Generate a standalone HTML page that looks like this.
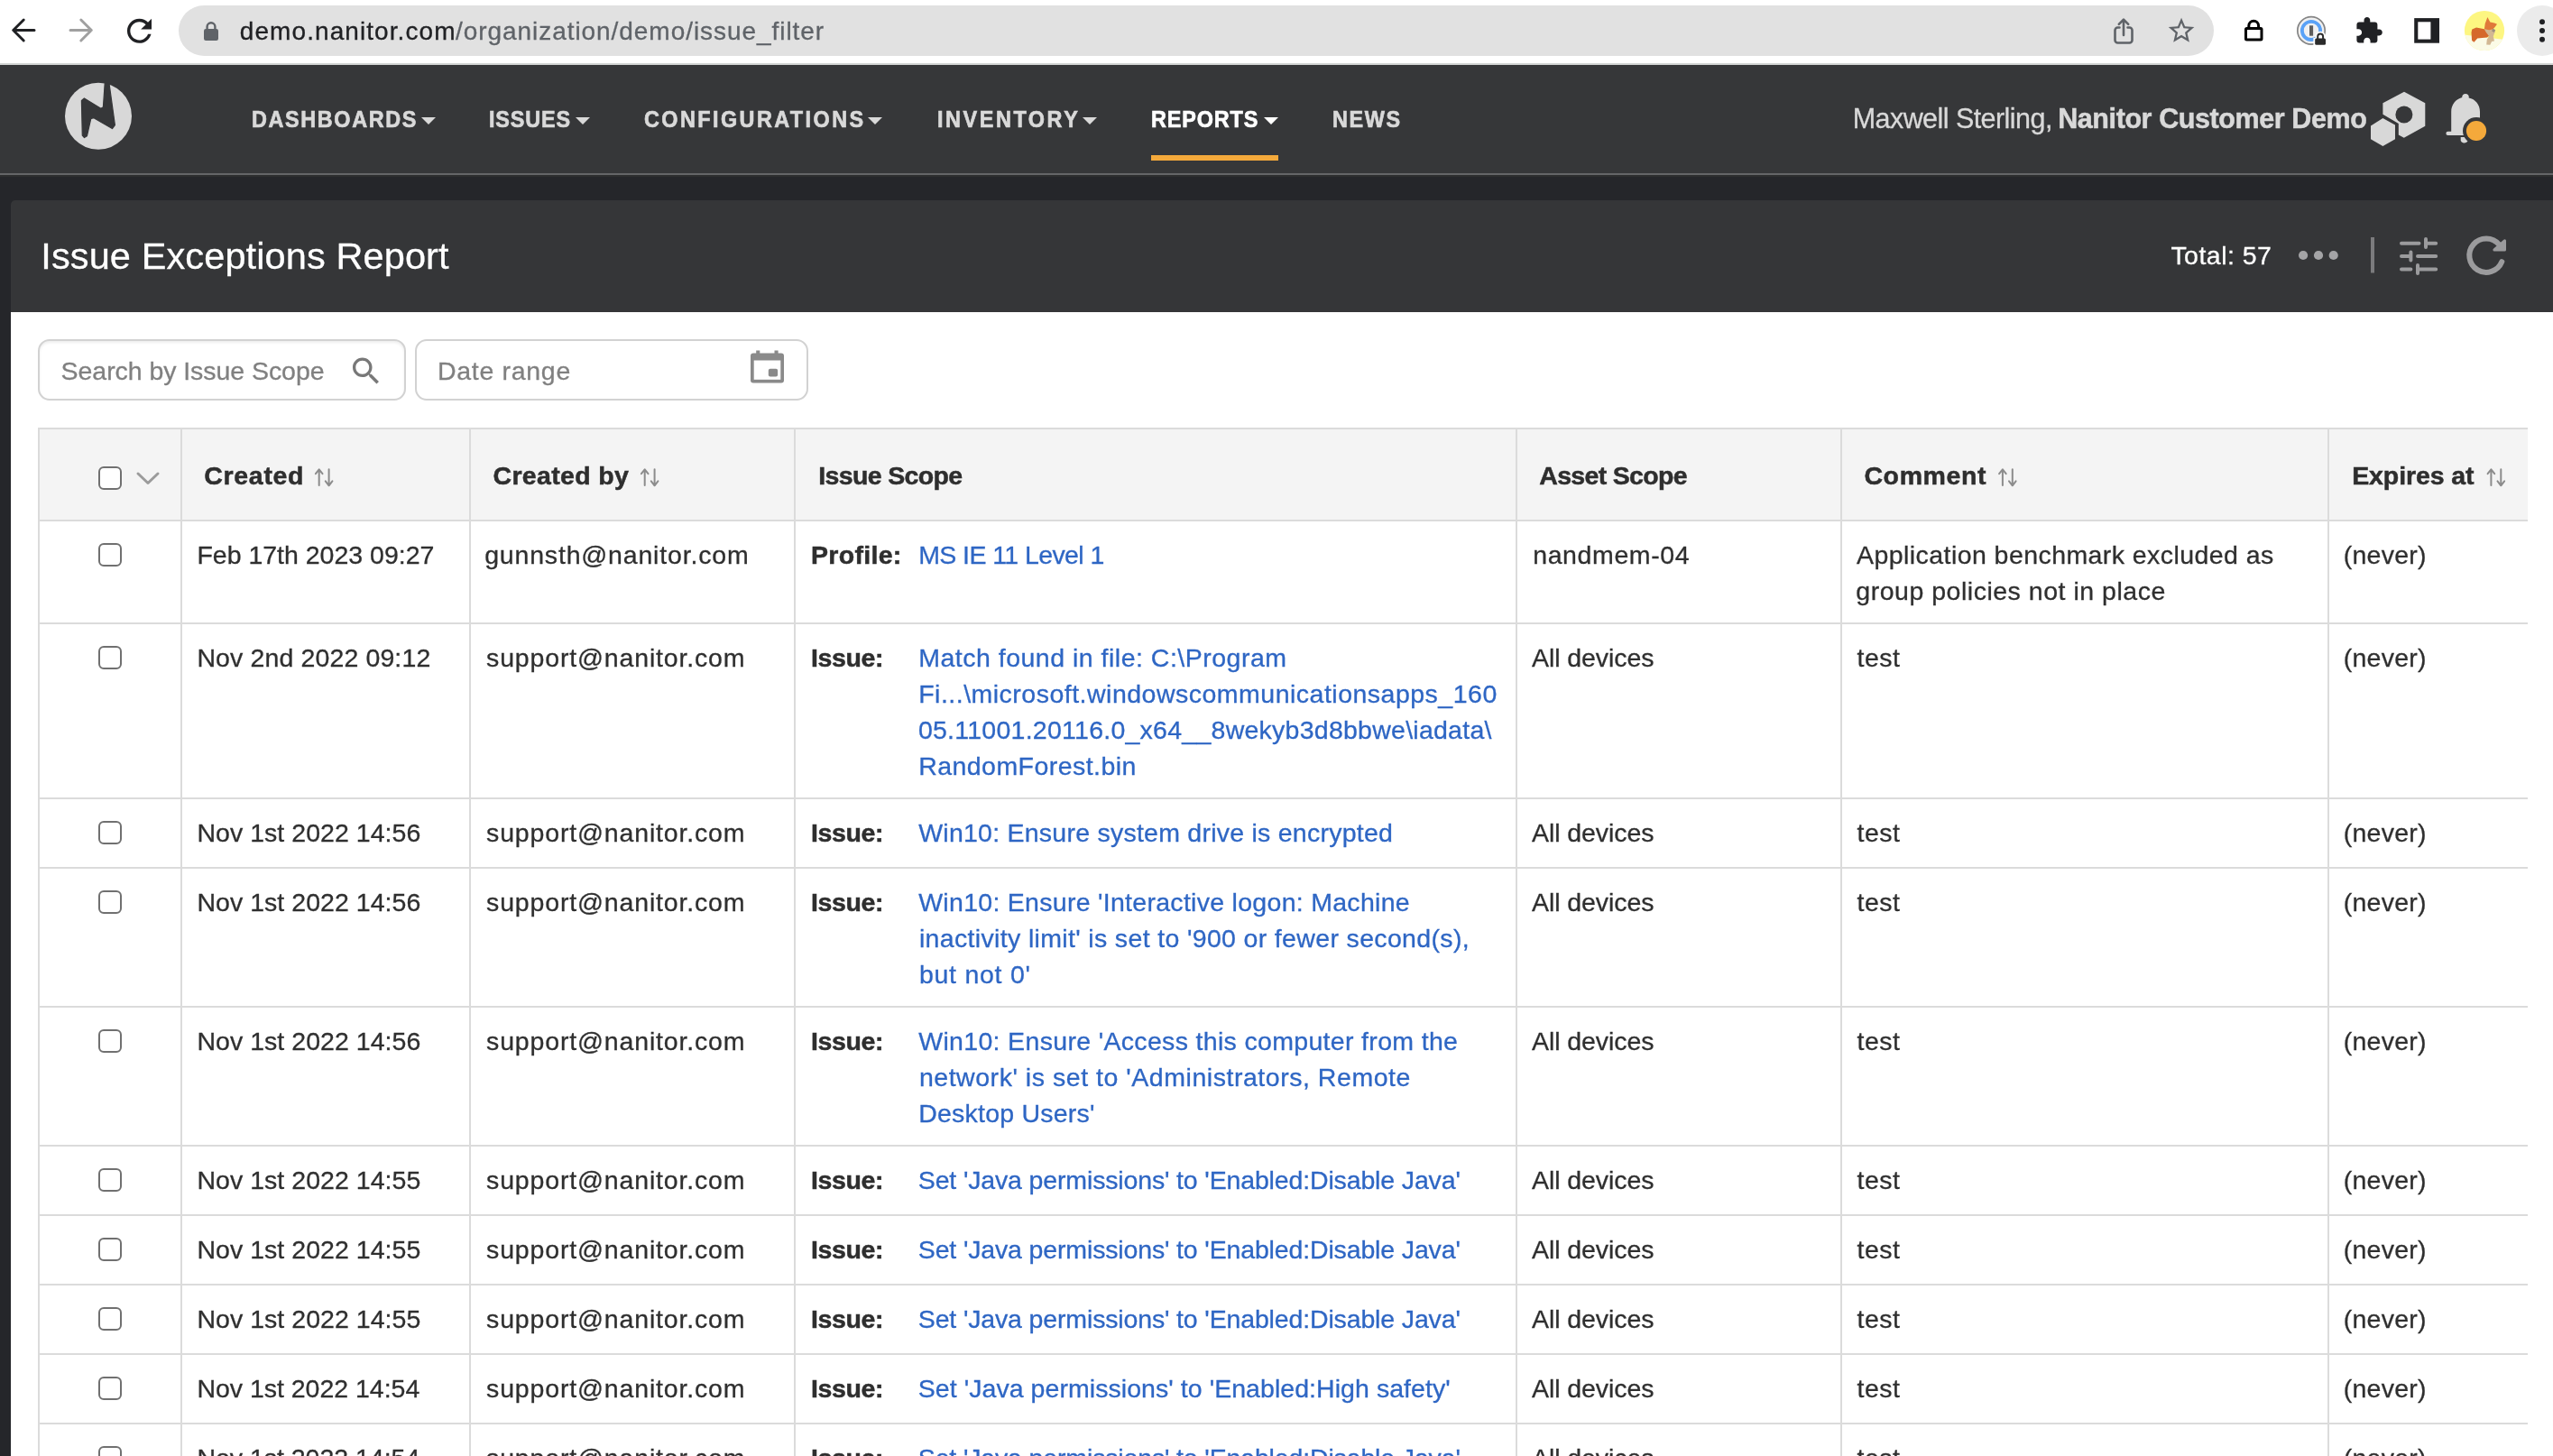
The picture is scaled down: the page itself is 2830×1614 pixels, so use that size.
<!DOCTYPE html>
<html><head><meta charset="utf-8"><title>Issue Exceptions Report</title>
<style>
html,body{margin:0;padding:0}
body{width:2830px;height:1614px;overflow:hidden;position:relative;background:#fff;font-family:"Liberation Sans", sans-serif}
.b{position:absolute}
.t{position:absolute;white-space:pre;font-family:"Liberation Sans", sans-serif}
svg.ov{position:absolute;left:0;top:0}
#root{position:absolute;left:0;top:0;width:2830px;height:1614px;overflow:hidden}
html{overflow:hidden}
#tx{position:absolute;left:0;top:0;width:2830px;height:1614px;will-change:transform}
</style></head><body>
<div id="root">
<div class="b" style="left:0px;top:0px;width:2830px;height:70px;background:#ffffff;"></div>
<div class="b" style="left:0px;top:70px;width:2830px;height:2px;background:#d3d5d4;"></div>
<div class="b" style="left:198px;top:6px;width:2256px;height:56px;background:#e1e1e1;border-radius:28px"></div>
<div class="b" style="left:2790px;top:6px;width:56px;height:56px;background:#ebebeb;border-radius:28px"></div>
<div class="b" style="left:0px;top:72px;width:2830px;height:120px;background:#363739;"></div>
<div class="b" style="left:0px;top:192px;width:2830px;height:2px;background:#656668;"></div>
<div class="b" style="left:0px;top:194px;width:2830px;height:1420px;background:#25262a;"></div>
<div class="b" style="left:0px;top:194px;width:2830px;height:2px;background:#2d2e2f;"></div>
<div class="b" style="left:1276px;top:172px;width:141px;height:6px;background:#f4a93b;"></div>
<div class="b" style="left:12px;top:222px;width:2818px;height:124px;background:#353638;border-radius:5px 0 0 0"></div>
<div class="b" style="left:12px;top:346px;width:2818px;height:1268px;background:#ffffff;"></div>
<div class="b" style="left:42px;top:376px;width:408px;height:68px;background:#fff;border:2px solid #d2d2d2;border-radius:13px;box-sizing:border-box;box-shadow:inset 0 2px 3px rgba(0,0,0,0.07)"></div>
<div class="b" style="left:460px;top:376px;width:436px;height:68px;background:#fff;border:2px solid #d2d2d2;border-radius:13px;box-sizing:border-box"></div>
<div class="b" style="left:42px;top:476px;width:2760px;height:100px;background:#f4f4f4;"></div>
<div class="b" style="left:42px;top:474px;width:2760px;height:2px;background:#dbdbdb;"></div>
<div class="b" style="left:42px;top:576px;width:2760px;height:2px;background:#dbdbdb;"></div>
<div class="b" style="left:42px;top:690px;width:2760px;height:2px;background:#dbdbdb;"></div>
<div class="b" style="left:42px;top:884px;width:2760px;height:2px;background:#dbdbdb;"></div>
<div class="b" style="left:42px;top:961px;width:2760px;height:2px;background:#dbdbdb;"></div>
<div class="b" style="left:42px;top:1115px;width:2760px;height:2px;background:#dbdbdb;"></div>
<div class="b" style="left:42px;top:1269px;width:2760px;height:2px;background:#dbdbdb;"></div>
<div class="b" style="left:42px;top:1346px;width:2760px;height:2px;background:#dbdbdb;"></div>
<div class="b" style="left:42px;top:1423px;width:2760px;height:2px;background:#dbdbdb;"></div>
<div class="b" style="left:42px;top:1500px;width:2760px;height:2px;background:#dbdbdb;"></div>
<div class="b" style="left:42px;top:1577px;width:2760px;height:2px;background:#dbdbdb;"></div>
<div class="b" style="left:42px;top:474px;width:2px;height:1140px;background:#dbdbdb;"></div>
<div class="b" style="left:200px;top:474px;width:2px;height:1140px;background:#dbdbdb;"></div>
<div class="b" style="left:520px;top:474px;width:2px;height:1140px;background:#dbdbdb;"></div>
<div class="b" style="left:880px;top:474px;width:2px;height:1140px;background:#dbdbdb;"></div>
<div class="b" style="left:1680px;top:474px;width:2px;height:1140px;background:#dbdbdb;"></div>
<div class="b" style="left:2040px;top:474px;width:2px;height:1140px;background:#dbdbdb;"></div>
<div class="b" style="left:2580px;top:474px;width:2px;height:1140px;background:#dbdbdb;"></div>
<div class="b" style="left:109px;top:517px;width:26px;height:26px;background:#fff;border:2px solid #707070;border-radius:6px;box-sizing:border-box"></div>
<div class="b" style="left:109px;top:602px;width:26px;height:26px;background:#fff;border:2px solid #707070;border-radius:6px;box-sizing:border-box"></div>
<div class="b" style="left:109px;top:716px;width:26px;height:26px;background:#fff;border:2px solid #707070;border-radius:6px;box-sizing:border-box"></div>
<div class="b" style="left:109px;top:910px;width:26px;height:26px;background:#fff;border:2px solid #707070;border-radius:6px;box-sizing:border-box"></div>
<div class="b" style="left:109px;top:987px;width:26px;height:26px;background:#fff;border:2px solid #707070;border-radius:6px;box-sizing:border-box"></div>
<div class="b" style="left:109px;top:1141px;width:26px;height:26px;background:#fff;border:2px solid #707070;border-radius:6px;box-sizing:border-box"></div>
<div class="b" style="left:109px;top:1295px;width:26px;height:26px;background:#fff;border:2px solid #707070;border-radius:6px;box-sizing:border-box"></div>
<div class="b" style="left:109px;top:1372px;width:26px;height:26px;background:#fff;border:2px solid #707070;border-radius:6px;box-sizing:border-box"></div>
<div class="b" style="left:109px;top:1449px;width:26px;height:26px;background:#fff;border:2px solid #707070;border-radius:6px;box-sizing:border-box"></div>
<div class="b" style="left:109px;top:1526px;width:26px;height:26px;background:#fff;border:2px solid #707070;border-radius:6px;box-sizing:border-box"></div>
<div class="b" style="left:109px;top:1603px;width:26px;height:26px;background:#fff;border:2px solid #707070;border-radius:6px;box-sizing:border-box"></div>
<svg class="ov" width="2830" height="1614" viewBox="0 0 2830 1614">
<polygon points="467,130 483,130 475,138" fill="#d9d9d9"/><polygon points="638,130 654,130 646,138" fill="#d9d9d9"/><polygon points="962,130 978,130 970,138" fill="#d9d9d9"/><polygon points="1200,130 1216,130 1208,138" fill="#d9d9d9"/><polygon points="1401,130 1417,130 1409,138" fill="#ffffff"/>
<g fill="none" stroke="#8c8c8c" stroke-width="2" stroke-linecap="round" stroke-linejoin="round"><path d="M353.70000000000005,538 V520.6 M349.90000000000003,525.2 L353.70000000000005,520.3 L357.50000000000006,525.2"/><path d="M364.6,520.3 V538 M360.8,533.4 L364.6,538.3 L368.40000000000003,533.4"/></g><g fill="none" stroke="#8c8c8c" stroke-width="2" stroke-linecap="round" stroke-linejoin="round"><path d="M714.7,538 V520.6 M710.9000000000001,525.2 L714.7,520.3 L718.5,525.2"/><path d="M725.6,520.3 V538 M721.8000000000001,533.4 L725.6,538.3 L729.4,533.4"/></g><g fill="none" stroke="#8c8c8c" stroke-width="2" stroke-linecap="round" stroke-linejoin="round"><path d="M2219.9,538 V520.6 M2216.1,525.2 L2219.9,520.3 L2223.7000000000003,525.2"/><path d="M2230.8,520.3 V538 M2227.0,533.4 L2230.8,538.3 L2234.6000000000004,533.4"/></g><g fill="none" stroke="#8c8c8c" stroke-width="2" stroke-linecap="round" stroke-linejoin="round"><path d="M2761.4,538 V520.6 M2757.6,525.2 L2761.4,520.3 L2765.2000000000003,525.2"/><path d="M2772.3,520.3 V538 M2768.5,533.4 L2772.3,538.3 L2776.1000000000004,533.4"/></g>
<path d="M153,525 L164,535.5 L175,525" fill="none" stroke="#9b9b9b" stroke-width="3" stroke-linecap="round" stroke-linejoin="round"/>
<g fill="none" stroke-width="3" stroke-linecap="round" stroke-linejoin="round"><path stroke="#202124" d="M38,33.5 H15 M26.2,22 L14.7,33.5 L26.2,45"/><path stroke="#a0a0a0" d="M78,33.5 H101 M89.8,22 L101.3,33.5 L89.8,45"/></g>
<g transform="translate(134.2,14.0) scale(1.69)"><path fill="#202124" d="M17.65 6.35C16.2 4.9 14.21 4 12 4c-4.42 0-7.99 3.58-7.99 8s3.57 8 7.99 8c3.73 0 6.84-2.55 7.73-6h-2.08c-.82 2.33-3.04 4-5.65 4-3.31 0-6-2.69-6-6s2.69-6 6-6c1.66 0 3.14.69 4.22 1.78L13 11h7V4l-2.35 2.35z"/></g>
<g><rect x="226" y="32" width="16" height="13" rx="2.2" fill="#5f6368"/><path d="M229.6,33 V29.6 a4.4,4.4 0 0 1 8.8,0 V33" fill="none" stroke="#5f6368" stroke-width="2.4"/></g>
<g fill="none" stroke="#5f6368" stroke-width="2.6" stroke-linecap="round" stroke-linejoin="round"><path d="M2349.5,30.5 H2347.5 a3,3 0 0 0 -3,3 V44.5 a3,3 0 0 0 3,3 H2360.5 a3,3 0 0 0 3,-3 V33.5 a3,3 0 0 0 -3,-3 H2358.5"/><path d="M2354,39 V22 M2348.8,26.8 L2354,21.6 L2359.2,26.8"/></g>
<g transform="translate(2400.9,16.8) scale(1.43)"><path fill="#5f6368" d="M22 9.24l-7.19-.62L12 2 9.19 8.63 2 9.24l5.46 4.73L5.82 21 12 17.27 18.18 21l-1.63-7.03L22 9.24zM12 15.4l-3.76 2.27 1-4.28-3.32-2.88 4.38-.38L12 6.1l1.71 4.04 4.38.38-3.32 2.88 1 4.28L12 15.4z"/></g>
<g fill="none" stroke="#000" stroke-width="3"><rect x="2489.5" y="31.5" width="17.5" height="12.5" rx="1"/><path d="M2492.8,31 V28.6 a5.4,5.4 0 0 1 10.8,0 V31"/></g>
<g><circle cx="2562" cy="33.9" r="15.2" fill="#f1f1f1" stroke="#858585" stroke-width="1.7"/><circle cx="2562" cy="33.9" r="10.1" fill="#f1f1f1" stroke="#5aa2f7" stroke-width="3.8"/><rect x="2560" y="28.3" width="4.1" height="11.4" fill="#5e5e5e"/><path d="M2564.4,51.5 V42 h2 V40.3 a5.7,5.7 0 0 1 11.4,0 V42 H2580 V51.5 Z" fill="#fff"/><rect x="2566.2" y="42.4" width="11.8" height="7.4" rx="1.5" fill="#2b2b2b"/><path d="M2569.2,43 V40.5 a2.95,2.95 0 0 1 5.9,0 V43" fill="none" stroke="#2b2b2b" stroke-width="2"/></g>
<g transform="translate(2609.7,17.75) scale(1.352)"><path fill="#202124" d="M20.5 11H19V7c0-1.1-.9-2-2-2h-4V3.5C13 2.12 11.88 1 10.5 1S8 2.12 8 3.5V5H4c-1.1 0-1.99.9-1.99 2v3.8H3.5c1.49 0 2.7 1.21 2.7 2.7s-1.21 2.7-2.7 2.7H2V20c0 1.1.9 2 2 2h3.8v-1.5c0-1.49 1.21-2.7 2.7-2.7 1.49 0 2.7 1.21 2.7 2.7V22H17c1.1 0 2-.9 2-2v-4h1.5c1.38 0 2.5-1.12 2.5-2.5S21.88 11 20.5 11z"/></g>
<g><rect x="2676.2" y="20.1" width="27.8" height="27.6" fill="#202124"/><rect x="2680.3" y="24.3" width="14.1" height="19.3" fill="#fff"/></g>
<g><defs><clipPath id="avc"><circle cx="2754" cy="34" r="22.1"/></clipPath></defs><circle cx="2754" cy="34" r="22.1" fill="#fdf681"/><g clip-path="url(#avc)"><polygon points="2730,38.4 2778,44 2778,58 2730,58" fill="#fbfbe6"/><polygon points="2740.3,32.6 2745,30.6 2753.9,32.3 2760.3,39.1 2756.8,41.4 2746.2,42.4 2742.5,46.7 2740.1,45 2739.5,36.1" fill="#d5682c"/><polygon points="2753.9,32.3 2763.3,32.6 2765.6,35.6 2763.8,40.3 2765,45.5 2762.1,46.1 2760.3,49.7 2756.2,49.4 2756.8,43.8 2759.1,40.3 2755.6,35.6" fill="#d2b893"/><polygon points="2753.9,32.3 2754.7,26.2 2757.4,19.1 2760.3,24.4 2765,25.6 2768,26.7 2765.4,30.3 2763.3,32.6 2759.1,33.2" fill="#e0793a"/><polygon points="2763.3,31.5 2766.2,33.2 2765,36.1 2762.1,34.4" fill="#9c8f80"/></g></g>
<g fill="#202124"><circle cx="2818" cy="24.3" r="3"/><circle cx="2818" cy="34" r="3"/><circle cx="2818" cy="43.8" r="3"/></g>
<g><circle cx="109" cy="128.7" r="37" fill="#d8d8d8"/><path d="M90.4,111.5 L93.4,108.9 L111.8,120.2 L114.4,118.9 L116.3,91 L121,92.5 L127.4,138.7 L124.4,142.6 L103.6,130.6 L100.7,131.8 L96.4,150.8 L93.5,152.6 L91.3,150.2 Z" fill="#363739" stroke="#363739" stroke-width="1.2" stroke-linejoin="round"/></g>
<g fill="#d8d8d8"><path d="M2665,101.8 L2688.3,114.3 V139.7 L2664.8,152.8 L2658.8,149.4 V136.9 L2641.4,126.8 V114.3 Z"/><circle cx="2664.9" cy="127" r="9.5" fill="#363739"/><path d="M2641.4,130.9 L2655,138.6 V154.2 L2641.4,162 L2628,154.2 V139.4 Z"/></g>
<g><path fill="#d8d8d8" d="M2729.3,108.6 a3.8,3.8 0 1 1 7.4,0 C2744,110 2749,116 2749,124 V145.8 H2753 V150 H2713.5 a2.1,2.1 0 0 1 0,-4.2 H2717.2 V124 C2717.2,116 2722,110 2729.2,108 Z"/><path d="M2727.7,152 h8 a4,4 0 0 1 -8,4 z" fill="#d8d8d8"/><circle cx="2745" cy="145" r="15" fill="#363739"/><circle cx="2745" cy="145" r="11.1" fill="#f4a93b"/></g>
<g fill="#a4a4a6"><circle cx="2553.1" cy="283" r="5.1"/><circle cx="2570" cy="283" r="5.1"/><circle cx="2586.7" cy="283" r="5.1"/></g><rect x="2628" y="263" width="4" height="39.5" fill="#7b7b7d"/>
<g fill="none" stroke="#9b9b9d" stroke-width="4" stroke-linecap="round"><path d="M2662,269.7 H2681.5 M2689,265 V274 M2689,269.7 H2700.2"/><path d="M2662,283.9 H2672.4 M2672.4,279.5 V288.4 M2680,283.9 H2700.2"/><path d="M2662,298.4 H2672.4 M2680,294 V303 M2680,298.4 H2700.2"/></g>
<g><path d="M2770.3,271.1 A18.7,18.7 0 1 0 2773.3,290.2" fill="none" stroke="#9b9b9d" stroke-width="6" stroke-linecap="round"/><path d="M2776.4,266.9 V277 H2765 Z" fill="#9b9b9d" stroke="#9b9b9d" stroke-width="3.2" stroke-linejoin="round"/></g>
<g transform="translate(386,391.5) scale(1.658)"><path fill="#787878" d="M15.5 14h-.79l-.28-.27C15.41 12.59 16 11.11 16 9.5 16 5.91 13.09 3 9.5 3S3 5.91 3 9.5 5.91 16 9.5 16c1.61 0 3.09-.59 4.23-1.57l.27.28v.79l5 4.99L20.49 19l-4.99-5zm-6 0C7.01 14 5 11.99 5 9.5S7.01 5 9.5 5 14 7.01 14 9.5 11.99 14 9.5 14z"/></g>
<g fill="#8a8a8a"><rect x="832" y="391.5" width="37" height="33" rx="3"/><rect x="838.2" y="388.5" width="4.1" height="5"/><rect x="858.5" y="388.5" width="4.1" height="5"/><rect x="835.7" y="399.5" width="29.6" height="21.3" fill="#fff"/><rect x="851.8" y="408.8" width="10.3" height="8.6" rx="2"/></g>
</svg>
<div id="tx">
<div class="t" style="left:265.80px;top:13.50px;font-size:28px;line-height:42px;font-weight:400;color:#202124;letter-spacing:1.077px;-webkit-text-stroke:0.3px currentColor">demo.nanitor.com</div>
<div class="t" style="left:505.00px;top:13.50px;font-size:28px;line-height:42px;font-weight:400;color:#5f6368;letter-spacing:0.945px;-webkit-text-stroke:0.3px currentColor">/organization/demo/issue_filter</div>
<div class="t" style="left:278.50px;top:112.80px;font-size:26px;line-height:39px;font-weight:700;color:#d9d9d9;letter-spacing:1.802px;-webkit-text-stroke:0.7px currentColor;transform:scaleX(0.90);transform-origin:0 0">DASHBOARDS</div>
<div class="t" style="left:542.30px;top:112.80px;font-size:26px;line-height:39px;font-weight:700;color:#d9d9d9;letter-spacing:0.928px;-webkit-text-stroke:0.7px currentColor;transform:scaleX(0.90);transform-origin:0 0">ISSUES</div>
<div class="t" style="left:713.60px;top:112.80px;font-size:26px;line-height:39px;font-weight:700;color:#d9d9d9;letter-spacing:2.705px;-webkit-text-stroke:0.7px currentColor;transform:scaleX(0.90);transform-origin:0 0">CONFIGURATIONS</div>
<div class="t" style="left:1038.70px;top:112.80px;font-size:26px;line-height:39px;font-weight:700;color:#d9d9d9;letter-spacing:2.859px;-webkit-text-stroke:0.7px currentColor;transform:scaleX(0.90);transform-origin:0 0">INVENTORY</div>
<div class="t" style="left:1276.40px;top:112.80px;font-size:26px;line-height:39px;font-weight:700;color:#ffffff;letter-spacing:0.962px;-webkit-text-stroke:0.7px currentColor;transform:scaleX(0.90);transform-origin:0 0">REPORTS</div>
<div class="t" style="left:1476.70px;top:112.80px;font-size:26px;line-height:39px;font-weight:700;color:#d9d9d9;letter-spacing:1.818px;-webkit-text-stroke:0.7px currentColor;transform:scaleX(0.90);transform-origin:0 0">NEWS</div>
<div class="t" style="left:2053.70px;top:108.00px;font-size:30.5px;line-height:46px;font-weight:400;color:#d9d9d9;letter-spacing:-0.553px;-webkit-text-stroke:0.3px currentColor">Maxwell Sterling,</div>
<div class="t" style="left:2281.20px;top:108.00px;font-size:30.5px;line-height:46px;font-weight:700;color:#d9d9d9;letter-spacing:-0.408px;-webkit-text-stroke:0.5px currentColor">Nanitor Customer Demo</div>
<div class="t" style="left:45.30px;top:252.50px;font-size:41.5px;line-height:62px;font-weight:400;color:#ffffff;letter-spacing:0.110px;-webkit-text-stroke:0.3px currentColor">Issue Exceptions Report</div>
<div class="t" style="left:2406.40px;top:262.30px;font-size:28.5px;line-height:43px;font-weight:400;color:#ffffff;letter-spacing:0.477px;-webkit-text-stroke:0.3px currentColor">Total: 57</div>
<div class="t" style="left:67.60px;top:389.70px;font-size:28.5px;line-height:43px;font-weight:400;color:#808080;letter-spacing:-0.057px;-webkit-text-stroke:0.3px currentColor">Search by Issue Scope</div>
<div class="t" style="left:485.00px;top:389.50px;font-size:28.5px;line-height:43px;font-weight:400;color:#808080;letter-spacing:0.693px;-webkit-text-stroke:0.3px currentColor">Date range</div>
<div class="t" style="left:226.30px;top:505.70px;font-size:28.5px;line-height:43px;font-weight:700;color:#2e2e2e;letter-spacing:0.681px;-webkit-text-stroke:0.5px currentColor">Created</div>
<div class="t" style="left:546.50px;top:505.70px;font-size:28.5px;line-height:43px;font-weight:700;color:#2e2e2e;letter-spacing:0.328px;-webkit-text-stroke:0.5px currentColor">Created by</div>
<div class="t" style="left:907.30px;top:505.70px;font-size:28.5px;line-height:43px;font-weight:700;color:#2e2e2e;letter-spacing:-0.657px;-webkit-text-stroke:0.5px currentColor">Issue Scope</div>
<div class="t" style="left:1706.30px;top:505.70px;font-size:28.5px;line-height:43px;font-weight:700;color:#2e2e2e;letter-spacing:-0.682px;-webkit-text-stroke:0.5px currentColor">Asset Scope</div>
<div class="t" style="left:2066.40px;top:505.70px;font-size:28.5px;line-height:43px;font-weight:700;color:#2e2e2e;letter-spacing:0.628px;-webkit-text-stroke:0.5px currentColor">Comment</div>
<div class="t" style="left:2607.20px;top:505.70px;font-size:28.5px;line-height:43px;font-weight:700;color:#2e2e2e;letter-spacing:-0.094px;-webkit-text-stroke:0.5px currentColor">Expires at</div>
<div class="t" style="left:218.40px;top:593.50px;font-size:28.5px;line-height:43px;font-weight:400;color:#2f2f2f;letter-spacing:-0.006px;-webkit-text-stroke:0.3px currentColor">Feb 17th 2023 09:27</div>
<div class="t" style="left:537.20px;top:593.50px;font-size:28.5px;line-height:43px;font-weight:400;color:#2f2f2f;letter-spacing:0.820px;-webkit-text-stroke:0.3px currentColor">gunnsth@nanitor.com</div>
<div class="t" style="left:899.00px;top:593.50px;font-size:28.5px;line-height:43px;font-weight:700;color:#2e2e2e;letter-spacing:0.302px;-webkit-text-stroke:0.5px currentColor">Profile:</div>
<div class="t" style="left:1018.20px;top:593.50px;font-size:28.5px;line-height:43px;font-weight:400;color:#2e66c4;letter-spacing:-0.591px;-webkit-text-stroke:0.3px currentColor">MS IE 11 Level 1</div>
<div class="t" style="left:1699.20px;top:593.50px;font-size:28.5px;line-height:43px;font-weight:400;color:#2f2f2f;letter-spacing:0.614px;-webkit-text-stroke:0.3px currentColor">nandmem-04</div>
<div class="t" style="left:2058.10px;top:593.50px;font-size:28.5px;line-height:43px;font-weight:400;color:#2f2f2f;letter-spacing:0.431px;-webkit-text-stroke:0.3px currentColor">Application benchmark excluded as</div>
<div class="t" style="left:2057.30px;top:633.50px;font-size:28.5px;line-height:43px;font-weight:400;color:#2f2f2f;letter-spacing:0.516px;-webkit-text-stroke:0.3px currentColor">group policies not in place</div>
<div class="t" style="left:2597.80px;top:593.50px;font-size:28.5px;line-height:43px;font-weight:400;color:#2f2f2f;letter-spacing:0.236px;-webkit-text-stroke:0.3px currentColor">(never)</div>
<div class="t" style="left:218.40px;top:707.50px;font-size:28.5px;line-height:43px;font-weight:400;color:#2f2f2f;letter-spacing:0.126px;-webkit-text-stroke:0.3px currentColor">Nov 2nd 2022 09:12</div>
<div class="t" style="left:539.10px;top:707.50px;font-size:28.5px;line-height:43px;font-weight:400;color:#2f2f2f;letter-spacing:0.840px;-webkit-text-stroke:0.3px currentColor">support@nanitor.com</div>
<div class="t" style="left:899.00px;top:707.50px;font-size:28.5px;line-height:43px;font-weight:700;color:#2e2e2e;letter-spacing:-0.376px;-webkit-text-stroke:0.5px currentColor">Issue:</div>
<div class="t" style="left:1018.20px;top:707.50px;font-size:28.5px;line-height:43px;font-weight:400;color:#2e66c4;letter-spacing:0.500px;-webkit-text-stroke:0.3px currentColor">Match found in file: C:\Program</div>
<div class="t" style="left:1018.20px;top:747.50px;font-size:28.5px;line-height:43px;font-weight:400;color:#2e66c4;letter-spacing:0.493px;-webkit-text-stroke:0.3px currentColor">Fi...\microsoft.windowscommunicationsapps_160</div>
<div class="t" style="left:1017.90px;top:787.50px;font-size:28.5px;line-height:43px;font-weight:400;color:#2e66c4;letter-spacing:0.253px;-webkit-text-stroke:0.3px currentColor">05.11001.20116.0_x64__8wekyb3d8bbwe\iadata\</div>
<div class="t" style="left:1018.20px;top:827.50px;font-size:28.5px;line-height:43px;font-weight:400;color:#2e66c4;letter-spacing:0.447px;-webkit-text-stroke:0.3px currentColor">RandomForest.bin</div>
<div class="t" style="left:1698.10px;top:707.50px;font-size:28.5px;line-height:43px;font-weight:400;color:#2f2f2f;letter-spacing:-0.087px;-webkit-text-stroke:0.3px currentColor">All devices</div>
<div class="t" style="left:2058.60px;top:707.50px;font-size:28.5px;line-height:43px;font-weight:400;color:#2f2f2f;letter-spacing:0.460px;-webkit-text-stroke:0.3px currentColor">test</div>
<div class="t" style="left:2597.80px;top:707.50px;font-size:28.5px;line-height:43px;font-weight:400;color:#2f2f2f;letter-spacing:0.236px;-webkit-text-stroke:0.3px currentColor">(never)</div>
<div class="t" style="left:218.40px;top:901.50px;font-size:28.5px;line-height:43px;font-weight:400;color:#2f2f2f;letter-spacing:0.040px;-webkit-text-stroke:0.3px currentColor">Nov 1st 2022 14:56</div>
<div class="t" style="left:539.10px;top:901.50px;font-size:28.5px;line-height:43px;font-weight:400;color:#2f2f2f;letter-spacing:0.840px;-webkit-text-stroke:0.3px currentColor">support@nanitor.com</div>
<div class="t" style="left:899.00px;top:901.50px;font-size:28.5px;line-height:43px;font-weight:700;color:#2e2e2e;letter-spacing:-0.376px;-webkit-text-stroke:0.5px currentColor">Issue:</div>
<div class="t" style="left:1018.20px;top:901.50px;font-size:28.5px;line-height:43px;font-weight:400;color:#2e66c4;letter-spacing:0.244px;-webkit-text-stroke:0.3px currentColor">Win10: Ensure system drive is encrypted</div>
<div class="t" style="left:1698.10px;top:901.50px;font-size:28.5px;line-height:43px;font-weight:400;color:#2f2f2f;letter-spacing:-0.087px;-webkit-text-stroke:0.3px currentColor">All devices</div>
<div class="t" style="left:2058.60px;top:901.50px;font-size:28.5px;line-height:43px;font-weight:400;color:#2f2f2f;letter-spacing:0.460px;-webkit-text-stroke:0.3px currentColor">test</div>
<div class="t" style="left:2597.80px;top:901.50px;font-size:28.5px;line-height:43px;font-weight:400;color:#2f2f2f;letter-spacing:0.236px;-webkit-text-stroke:0.3px currentColor">(never)</div>
<div class="t" style="left:218.40px;top:978.50px;font-size:28.5px;line-height:43px;font-weight:400;color:#2f2f2f;letter-spacing:0.040px;-webkit-text-stroke:0.3px currentColor">Nov 1st 2022 14:56</div>
<div class="t" style="left:539.10px;top:978.50px;font-size:28.5px;line-height:43px;font-weight:400;color:#2f2f2f;letter-spacing:0.840px;-webkit-text-stroke:0.3px currentColor">support@nanitor.com</div>
<div class="t" style="left:899.00px;top:978.50px;font-size:28.5px;line-height:43px;font-weight:700;color:#2e2e2e;letter-spacing:-0.376px;-webkit-text-stroke:0.5px currentColor">Issue:</div>
<div class="t" style="left:1018.20px;top:978.50px;font-size:28.5px;line-height:43px;font-weight:400;color:#2e66c4;letter-spacing:0.287px;-webkit-text-stroke:0.3px currentColor">Win10: Ensure &#x27;Interactive logon: Machine</div>
<div class="t" style="left:1018.90px;top:1018.50px;font-size:28.5px;line-height:43px;font-weight:400;color:#2e66c4;letter-spacing:0.346px;-webkit-text-stroke:0.3px currentColor">inactivity limit&#x27; is set to &#x27;900 or fewer second(s),</div>
<div class="t" style="left:1018.90px;top:1058.50px;font-size:28.5px;line-height:43px;font-weight:400;color:#2e66c4;letter-spacing:0.742px;-webkit-text-stroke:0.3px currentColor">but not 0&#x27;</div>
<div class="t" style="left:1698.10px;top:978.50px;font-size:28.5px;line-height:43px;font-weight:400;color:#2f2f2f;letter-spacing:-0.087px;-webkit-text-stroke:0.3px currentColor">All devices</div>
<div class="t" style="left:2058.60px;top:978.50px;font-size:28.5px;line-height:43px;font-weight:400;color:#2f2f2f;letter-spacing:0.460px;-webkit-text-stroke:0.3px currentColor">test</div>
<div class="t" style="left:2597.80px;top:978.50px;font-size:28.5px;line-height:43px;font-weight:400;color:#2f2f2f;letter-spacing:0.236px;-webkit-text-stroke:0.3px currentColor">(never)</div>
<div class="t" style="left:218.40px;top:1132.50px;font-size:28.5px;line-height:43px;font-weight:400;color:#2f2f2f;letter-spacing:0.040px;-webkit-text-stroke:0.3px currentColor">Nov 1st 2022 14:56</div>
<div class="t" style="left:539.10px;top:1132.50px;font-size:28.5px;line-height:43px;font-weight:400;color:#2f2f2f;letter-spacing:0.840px;-webkit-text-stroke:0.3px currentColor">support@nanitor.com</div>
<div class="t" style="left:899.00px;top:1132.50px;font-size:28.5px;line-height:43px;font-weight:700;color:#2e2e2e;letter-spacing:-0.376px;-webkit-text-stroke:0.5px currentColor">Issue:</div>
<div class="t" style="left:1018.20px;top:1132.50px;font-size:28.5px;line-height:43px;font-weight:400;color:#2e66c4;letter-spacing:0.329px;-webkit-text-stroke:0.3px currentColor">Win10: Ensure &#x27;Access this computer from the</div>
<div class="t" style="left:1018.90px;top:1172.50px;font-size:28.5px;line-height:43px;font-weight:400;color:#2e66c4;letter-spacing:0.536px;-webkit-text-stroke:0.3px currentColor">network&#x27; is set to &#x27;Administrators, Remote</div>
<div class="t" style="left:1018.20px;top:1212.50px;font-size:28.5px;line-height:43px;font-weight:400;color:#2e66c4;letter-spacing:0.224px;-webkit-text-stroke:0.3px currentColor">Desktop Users&#x27;</div>
<div class="t" style="left:1698.10px;top:1132.50px;font-size:28.5px;line-height:43px;font-weight:400;color:#2f2f2f;letter-spacing:-0.087px;-webkit-text-stroke:0.3px currentColor">All devices</div>
<div class="t" style="left:2058.60px;top:1132.50px;font-size:28.5px;line-height:43px;font-weight:400;color:#2f2f2f;letter-spacing:0.460px;-webkit-text-stroke:0.3px currentColor">test</div>
<div class="t" style="left:2597.80px;top:1132.50px;font-size:28.5px;line-height:43px;font-weight:400;color:#2f2f2f;letter-spacing:0.236px;-webkit-text-stroke:0.3px currentColor">(never)</div>
<div class="t" style="left:218.40px;top:1286.50px;font-size:28.5px;line-height:43px;font-weight:400;color:#2f2f2f;letter-spacing:0.040px;-webkit-text-stroke:0.3px currentColor">Nov 1st 2022 14:55</div>
<div class="t" style="left:539.10px;top:1286.50px;font-size:28.5px;line-height:43px;font-weight:400;color:#2f2f2f;letter-spacing:0.840px;-webkit-text-stroke:0.3px currentColor">support@nanitor.com</div>
<div class="t" style="left:899.00px;top:1286.50px;font-size:28.5px;line-height:43px;font-weight:700;color:#2e2e2e;letter-spacing:-0.376px;-webkit-text-stroke:0.5px currentColor">Issue:</div>
<div class="t" style="left:1017.80px;top:1286.50px;font-size:28.5px;line-height:43px;font-weight:400;color:#2e66c4;letter-spacing:-0.146px;-webkit-text-stroke:0.3px currentColor">Set &#x27;Java permissions&#x27; to &#x27;Enabled:Disable Java&#x27;</div>
<div class="t" style="left:1698.10px;top:1286.50px;font-size:28.5px;line-height:43px;font-weight:400;color:#2f2f2f;letter-spacing:-0.087px;-webkit-text-stroke:0.3px currentColor">All devices</div>
<div class="t" style="left:2058.60px;top:1286.50px;font-size:28.5px;line-height:43px;font-weight:400;color:#2f2f2f;letter-spacing:0.460px;-webkit-text-stroke:0.3px currentColor">test</div>
<div class="t" style="left:2597.80px;top:1286.50px;font-size:28.5px;line-height:43px;font-weight:400;color:#2f2f2f;letter-spacing:0.236px;-webkit-text-stroke:0.3px currentColor">(never)</div>
<div class="t" style="left:218.40px;top:1363.50px;font-size:28.5px;line-height:43px;font-weight:400;color:#2f2f2f;letter-spacing:0.040px;-webkit-text-stroke:0.3px currentColor">Nov 1st 2022 14:55</div>
<div class="t" style="left:539.10px;top:1363.50px;font-size:28.5px;line-height:43px;font-weight:400;color:#2f2f2f;letter-spacing:0.840px;-webkit-text-stroke:0.3px currentColor">support@nanitor.com</div>
<div class="t" style="left:899.00px;top:1363.50px;font-size:28.5px;line-height:43px;font-weight:700;color:#2e2e2e;letter-spacing:-0.376px;-webkit-text-stroke:0.5px currentColor">Issue:</div>
<div class="t" style="left:1017.80px;top:1363.50px;font-size:28.5px;line-height:43px;font-weight:400;color:#2e66c4;letter-spacing:-0.146px;-webkit-text-stroke:0.3px currentColor">Set &#x27;Java permissions&#x27; to &#x27;Enabled:Disable Java&#x27;</div>
<div class="t" style="left:1698.10px;top:1363.50px;font-size:28.5px;line-height:43px;font-weight:400;color:#2f2f2f;letter-spacing:-0.087px;-webkit-text-stroke:0.3px currentColor">All devices</div>
<div class="t" style="left:2058.60px;top:1363.50px;font-size:28.5px;line-height:43px;font-weight:400;color:#2f2f2f;letter-spacing:0.460px;-webkit-text-stroke:0.3px currentColor">test</div>
<div class="t" style="left:2597.80px;top:1363.50px;font-size:28.5px;line-height:43px;font-weight:400;color:#2f2f2f;letter-spacing:0.236px;-webkit-text-stroke:0.3px currentColor">(never)</div>
<div class="t" style="left:218.40px;top:1440.50px;font-size:28.5px;line-height:43px;font-weight:400;color:#2f2f2f;letter-spacing:0.040px;-webkit-text-stroke:0.3px currentColor">Nov 1st 2022 14:55</div>
<div class="t" style="left:539.10px;top:1440.50px;font-size:28.5px;line-height:43px;font-weight:400;color:#2f2f2f;letter-spacing:0.840px;-webkit-text-stroke:0.3px currentColor">support@nanitor.com</div>
<div class="t" style="left:899.00px;top:1440.50px;font-size:28.5px;line-height:43px;font-weight:700;color:#2e2e2e;letter-spacing:-0.376px;-webkit-text-stroke:0.5px currentColor">Issue:</div>
<div class="t" style="left:1017.80px;top:1440.50px;font-size:28.5px;line-height:43px;font-weight:400;color:#2e66c4;letter-spacing:-0.146px;-webkit-text-stroke:0.3px currentColor">Set &#x27;Java permissions&#x27; to &#x27;Enabled:Disable Java&#x27;</div>
<div class="t" style="left:1698.10px;top:1440.50px;font-size:28.5px;line-height:43px;font-weight:400;color:#2f2f2f;letter-spacing:-0.087px;-webkit-text-stroke:0.3px currentColor">All devices</div>
<div class="t" style="left:2058.60px;top:1440.50px;font-size:28.5px;line-height:43px;font-weight:400;color:#2f2f2f;letter-spacing:0.460px;-webkit-text-stroke:0.3px currentColor">test</div>
<div class="t" style="left:2597.80px;top:1440.50px;font-size:28.5px;line-height:43px;font-weight:400;color:#2f2f2f;letter-spacing:0.236px;-webkit-text-stroke:0.3px currentColor">(never)</div>
<div class="t" style="left:218.40px;top:1517.50px;font-size:28.5px;line-height:43px;font-weight:400;color:#2f2f2f;letter-spacing:-0.019px;-webkit-text-stroke:0.3px currentColor">Nov 1st 2022 14:54</div>
<div class="t" style="left:539.10px;top:1517.50px;font-size:28.5px;line-height:43px;font-weight:400;color:#2f2f2f;letter-spacing:0.840px;-webkit-text-stroke:0.3px currentColor">support@nanitor.com</div>
<div class="t" style="left:899.00px;top:1517.50px;font-size:28.5px;line-height:43px;font-weight:700;color:#2e2e2e;letter-spacing:-0.376px;-webkit-text-stroke:0.5px currentColor">Issue:</div>
<div class="t" style="left:1017.80px;top:1517.50px;font-size:28.5px;line-height:43px;font-weight:400;color:#2e66c4;letter-spacing:0.057px;-webkit-text-stroke:0.3px currentColor">Set &#x27;Java permissions&#x27; to &#x27;Enabled:High safety&#x27;</div>
<div class="t" style="left:1698.10px;top:1517.50px;font-size:28.5px;line-height:43px;font-weight:400;color:#2f2f2f;letter-spacing:-0.087px;-webkit-text-stroke:0.3px currentColor">All devices</div>
<div class="t" style="left:2058.60px;top:1517.50px;font-size:28.5px;line-height:43px;font-weight:400;color:#2f2f2f;letter-spacing:0.460px;-webkit-text-stroke:0.3px currentColor">test</div>
<div class="t" style="left:2597.80px;top:1517.50px;font-size:28.5px;line-height:43px;font-weight:400;color:#2f2f2f;letter-spacing:0.236px;-webkit-text-stroke:0.3px currentColor">(never)</div>
<div class="t" style="left:218.40px;top:1594.50px;font-size:28.5px;line-height:43px;font-weight:400;color:#2f2f2f;letter-spacing:-0.019px;-webkit-text-stroke:0.3px currentColor">Nov 1st 2022 14:54</div>
<div class="t" style="left:539.10px;top:1594.50px;font-size:28.5px;line-height:43px;font-weight:400;color:#2f2f2f;letter-spacing:0.840px;-webkit-text-stroke:0.3px currentColor">support@nanitor.com</div>
<div class="t" style="left:899.00px;top:1594.50px;font-size:28.5px;line-height:43px;font-weight:700;color:#2e2e2e;letter-spacing:-0.376px;-webkit-text-stroke:0.5px currentColor">Issue:</div>
<div class="t" style="left:1017.80px;top:1594.50px;font-size:28.5px;line-height:43px;font-weight:400;color:#2e66c4;letter-spacing:-0.146px;-webkit-text-stroke:0.3px currentColor">Set &#x27;Java permissions&#x27; to &#x27;Enabled:Disable Java&#x27;</div>
<div class="t" style="left:1698.10px;top:1594.50px;font-size:28.5px;line-height:43px;font-weight:400;color:#2f2f2f;letter-spacing:-0.087px;-webkit-text-stroke:0.3px currentColor">All devices</div>
<div class="t" style="left:2058.60px;top:1594.50px;font-size:28.5px;line-height:43px;font-weight:400;color:#2f2f2f;letter-spacing:0.460px;-webkit-text-stroke:0.3px currentColor">test</div>
<div class="t" style="left:2597.80px;top:1594.50px;font-size:28.5px;line-height:43px;font-weight:400;color:#2f2f2f;letter-spacing:0.236px;-webkit-text-stroke:0.3px currentColor">(never)</div>
</div>
</div>
</body></html>
